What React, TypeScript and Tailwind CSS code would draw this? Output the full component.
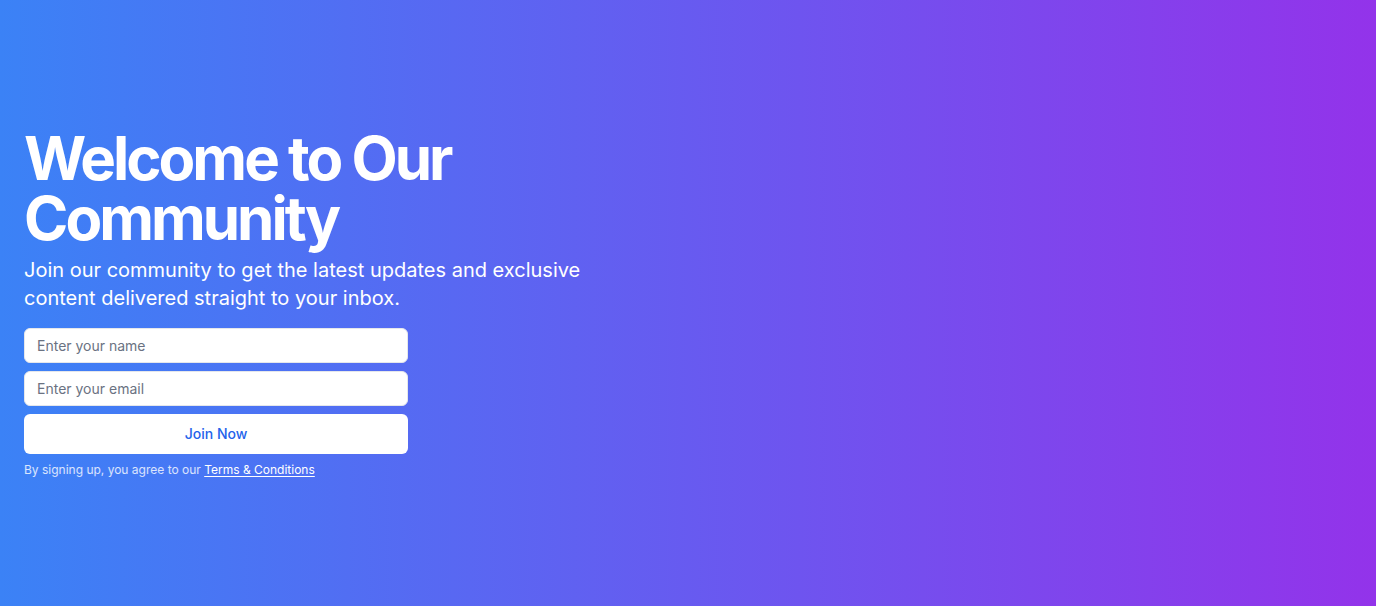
export default function App() {
  return (
    <div className="flex h-[606px] w-full items-center bg-[linear-gradient(to_right,#3b82f6,#9333ea)] px-6 font-['Inter',sans-serif] text-white">
      <div className="w-full max-w-[600px]">
        <h1 className="text-6xl font-bold tracking-tighter">Welcome to Our Community</h1>
        <p className="mt-2 text-xl leading-7 text-white">
          Join our community to get the latest updates and exclusive content delivered straight to your inbox.
        </p>
        <form className="mt-4 flex max-w-sm flex-col gap-2" onSubmit={(e) => e.preventDefault()}>
          <input
            type="text"
            placeholder="Enter your name"
            className="h-[35px] rounded-md border border-gray-200 bg-white px-3 text-sm text-gray-900 placeholder:text-gray-500"
          />
          <input
            type="email"
            placeholder="Enter your email"
            className="h-[35px] rounded-md border border-gray-200 bg-white px-3 text-sm text-gray-900 placeholder:text-gray-500"
          />
          <button type="submit" className="h-10 rounded-md bg-white text-sm font-medium text-[#2563eb]">
            Join Now
          </button>
        </form>
        <p className="mt-2 text-xs text-white/80">
          By signing up, you agree to our{" "}
          <a href="#" className="text-white underline underline-offset-2">
            Terms &amp; Conditions
          </a>
        </p>
      </div>
    </div>
  );
}
